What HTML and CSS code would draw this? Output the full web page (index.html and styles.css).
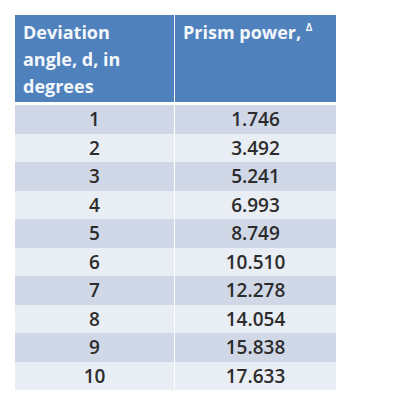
FILE: index.html
```html
<!DOCTYPE html>
<html>
<head>
<meta charset="utf-8">
<link rel="stylesheet" href="styles.css">
</head>
<body>
<div class="page">
  <table class="prism">
    <thead>
      <tr>
        <th class="c1">Deviation angle, d, in degrees</th>
        <th class="c2">Prism power, <sup class="delta">&#916;</sup></th>
      </tr>
    </thead>
    <tbody>
      <tr class="odd"><td>1</td><td>1.746</td></tr>
      <tr class="even"><td>2</td><td>3.492</td></tr>
      <tr class="odd"><td>3</td><td>5.241</td></tr>
      <tr class="even"><td>4</td><td>6.993</td></tr>
      <tr class="odd"><td>5</td><td>8.749</td></tr>
      <tr class="even"><td>6</td><td>10.510</td></tr>
      <tr class="odd"><td>7</td><td>12.278</td></tr>
      <tr class="even"><td>8</td><td>14.054</td></tr>
      <tr class="odd"><td>9</td><td>15.838</td></tr>
      <tr class="even"><td>10</td><td>17.633</td></tr>
    </tbody>
  </table>
</div>
</body>
</html>
```
FILE: styles.css
```css
html, body {
  margin: 0;
  padding: 0;
  background: #ffffff;
}
.page {
  padding: 15px 0 0 15px;
}
.prism {
  border-collapse: collapse;
  font-family: "Open Sans", "Liberation Sans", sans-serif;
  table-layout: fixed;
  width: 321px;
}
.prism th {
  background: #4f81bd;
  color: #f4f7fb;
  font-weight: 700;
  font-size: 18px;
  line-height: 27px;
  text-align: left;
  vertical-align: top;
  padding: 4px 8px 2px 8px;
  height: 80px;
  border-bottom: 3px solid #ffffff;
}
.prism .c1 {
  width: 143px;
  border-right: 1px solid #ffffff;
}
.prism .delta {
  font-size: 10px;
  vertical-align: 0;
  position: relative;
  top: -8px;
}
.prism td {
  height: 28.5px;
  padding: 0;
  text-align: center;
  font-size: 19px;
  font-weight: 600;
  color: #2c2c2c;
  line-height: 28px;
}
.prism td:first-child {
  border-right: 1px solid #ffffff;
}
.odd td { background: #d0d8e8; }
.even td { background: #e9edf4; }
```
